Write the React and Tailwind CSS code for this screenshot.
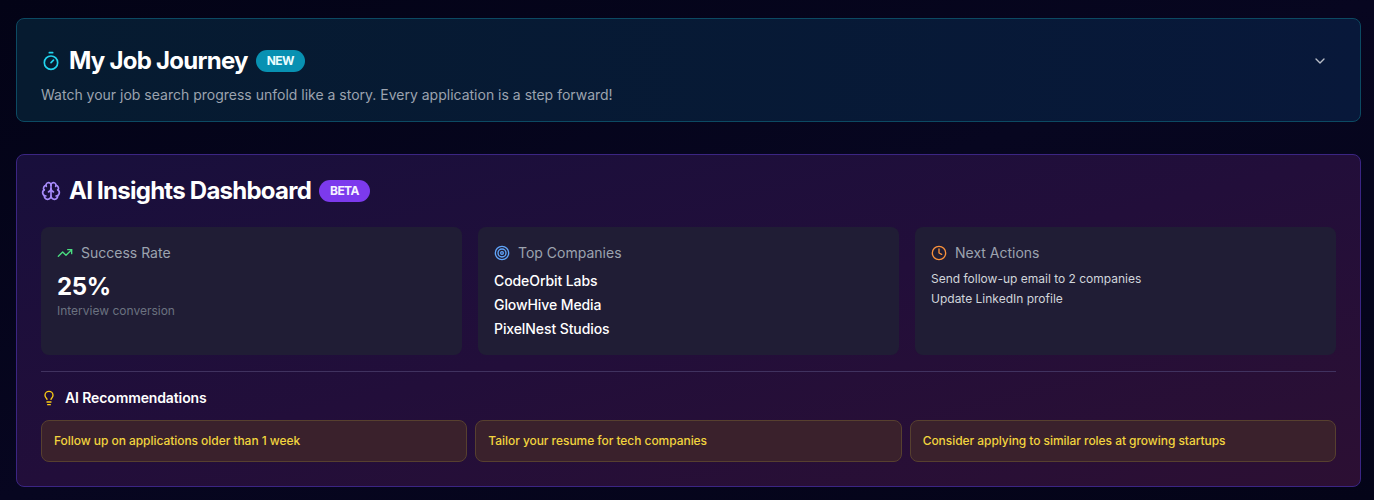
import React from "react";
import { Timer, ChevronDown, Brain, TrendingUp, Target, Clock, Lightbulb } from "lucide-react";

const font = { fontFamily: "Inter, sans-serif" };

function StatCard({ icon, title, children }) {
  return (
    <div className="h-[128px] rounded-lg bg-[#201d35] p-4">
      <div className="mb-1.5 flex h-5 items-center gap-2">
        {icon}
        <span className="text-sm font-normal text-[#9ca3af]">{title}</span>
      </div>
      {children}
    </div>
  );
}

export default function App() {
  return (
    <div style={font} className="h-[500px] overflow-hidden bg-gradient-to-br from-[#030316] via-[#070620] to-[#040418] pl-4 pr-[13px] pt-[18px]">
      <section className="mb-8 flex h-[104px] items-start justify-between rounded-lg border border-[#0c4a63] bg-gradient-to-r from-[#061b30] to-[#08183a] px-6 pt-[26px]">
        <div>
          <div className="flex h-8 items-center">
            <Timer className="mr-2 h-5 w-5 text-[#22d3ee]" strokeWidth={2} />
            <h2 className="text-2xl font-bold tracking-[-0.75px] text-white">My Job Journey</h2>
            <span className="ml-2 rounded-full bg-[#0891b2] px-[11px] py-[3px] text-xs font-bold leading-4 tracking-[-0.6px] text-[#ecfeff]">NEW</span>
          </div>
          <p className="mt-2 text-sm text-[#9ca3af]">Watch your job search progress unfold like a story. Every application is a step forward!</p>
        </div>
        <div className="flex h-8 w-8 items-center justify-center">
          <ChevronDown className="h-4 w-4 text-[#b8bdc7]" />
        </div>
      </section>

      <section className="h-[333px] rounded-lg border border-[#3b2583] bg-gradient-to-br from-[#180f3c] via-[#220e3a] to-[#2c0f33] px-6 pt-6">
        <div className="flex h-6 items-center">
          <Brain className="mr-2 h-5 w-5 text-[#a78bfa]" />
          <h2 className="text-2xl font-bold tracking-[-0.75px] text-white">AI Insights Dashboard</h2>
          <span className="ml-2 rounded-full bg-[#7c3aed] px-[11px] py-[3px] text-xs font-bold leading-4 tracking-[-0.6px] text-[#f5f3ff]">BETA</span>
        </div>
        <div className="mt-6 grid grid-cols-3 gap-4">
          <StatCard icon={<TrendingUp className="h-4 w-4 text-[#4ade80]" />} title="Success Rate">
            <div className="mt-2 text-2xl font-bold leading-8 tracking-[-0.3px] text-white">25%</div>
            <div className="text-xs text-[#6b7280]">Interview conversion</div>
          </StatCard>
          <StatCard icon={<Target className="h-4 w-4 text-[#60a5fa]" />} title="Top Companies">
            <div className="text-sm font-medium leading-6 tracking-[-0.09px] text-white">CodeOrbit Labs</div>
            <div className="text-sm font-medium leading-6 tracking-[-0.09px] text-white">GlowHive Media</div>
            <div className="text-sm font-medium leading-6 tracking-[-0.09px] text-white">PixelNest Studios</div>
          </StatCard>
          <StatCard icon={<Clock className="h-4 w-4 text-[#fb923c]" />} title="Next Actions">
            <div className="text-xs leading-5 text-[#d1d5db]">Send follow-up email to 2 companies</div>
            <div className="text-xs leading-5 text-[#d1d5db]">Update LinkedIn profile</div>
          </StatCard>
        </div>
        <div className="mt-4 border-t border-[#40325f] pt-4">
          <div className="flex h-5 items-center">
            <Lightbulb className="mr-2 h-4 w-4 text-[#facc15]" />
            <h4 className="text-sm font-semibold tracking-[-0.12px] text-white">AI Recommendations</h4>
          </div>
          <div className="mt-3 grid grid-cols-3 gap-2">
            {["Follow up on applications older than 1 week", "Tailor your resume for tech companies", "Consider applying to similar roles at growing startups"].map((t) => (
              <div key={t} className="flex h-[42px] items-center rounded-lg border border-[#57402f] bg-[#3a212c] px-3 text-xs font-medium tracking-[-0.05px] text-[#f2d43e]">{t}</div>
            ))}
          </div>
        </div>
      </section>
    </div>
  );
}
